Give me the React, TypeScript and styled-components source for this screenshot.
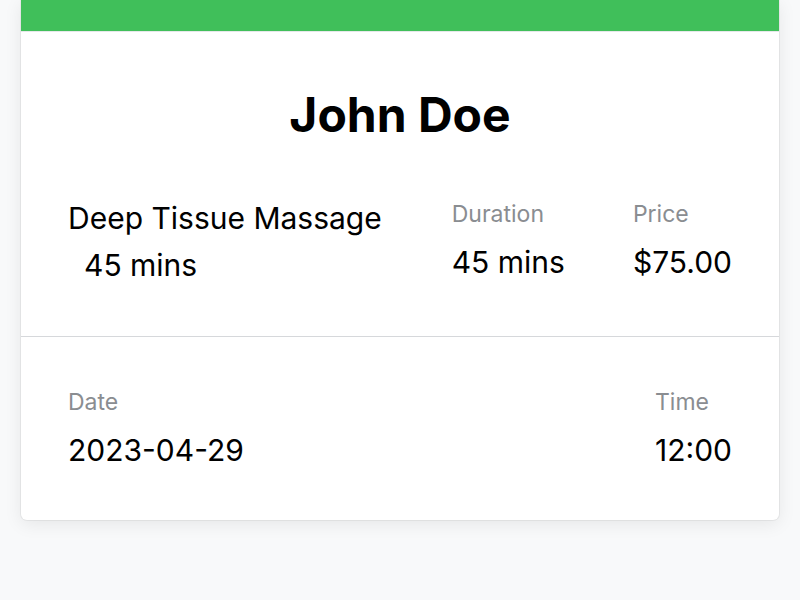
import styled, { createGlobalStyle } from 'styled-components';

const GlobalStyle = createGlobalStyle`
  html, body {
    margin: 0;
    padding: 0;
    background: #f8f9fa;
    font-family: Inter, "Noto Sans", sans-serif;
    color: #000;
  }
`;

const Page = styled.div`
  padding: 0 21px;
  height: 600px;
  box-sizing: border-box;
`;

const Card = styled.div`
  background: #fff;
  border-radius: 0 0 6px 6px;
  box-shadow: 0 4px 18px rgba(0, 0, 0, 0.08), 0 0 0 1px rgba(0, 0, 0, 0.05);
  overflow: hidden;
`;

const TopBar = styled.div`
  height: 31px;
  background: #40bf5a;
  border-bottom: 1px solid #e6e8ea;
`;

const Section = styled.div<{ $pad: string }>`
  padding: ${(p) => p.$pad};
`;

const Divider = styled.div`
  height: 1px;
  background: #d6d8db;
`;

const Name = styled.h1`
  margin: 0 0 56px;
  text-align: center;
  font-size: 48px;
  font-weight: 700;
  line-height: 58px;
`;

const Row = styled.div`
  display: flex;
  align-items: flex-start;
  gap: 68px;
`;

const Grow = styled.div`
  flex: 1;
  white-space: nowrap;
`;

const Col = styled.div`
  display: flex;
  flex-direction: column;
  white-space: nowrap;
`;

const Label = styled.div`
  font-size: 23px;
  line-height: 28px;
  color: #8a8d91;
  margin-bottom: 16px;
`;

const Value = styled.div<{ $indent?: boolean }>`
  font-size: 30px;
  line-height: 36px;
  padding-left: ${(p) => (p.$indent ? '16px' : '0')};
`;

const ServiceName = styled.div`
  font-size: 30px;
  line-height: 36px;
  margin-bottom: 11px;
`;

export default function App() {
  return (
    <>
      <GlobalStyle />
      <Page>
        <Card>
          <TopBar />
          <Section $pad="54px 47px 53px">
            <Name>John Doe</Name>
            <Row>
              <Grow>
                <ServiceName>Deep Tissue Massage</ServiceName>
                <Value $indent>45 mins</Value>
              </Grow>
              <Col>
                <Label>Duration</Label>
                <Value>45 mins</Value>
              </Col>
              <Col>
                <Label>Price</Label>
                <Value>$75.00</Value>
              </Col>
            </Row>
          </Section>
          <Divider />
          <Section $pad="51px 47px 52px">
            <Row>
              <Grow>
                <Label>Date</Label>
                <Value>2023-04-29</Value>
              </Grow>
              <Col>
                <Label>Time</Label>
                <Value>12:00</Value>
              </Col>
            </Row>
          </Section>
        </Card>
      </Page>
    </>
  );
}
